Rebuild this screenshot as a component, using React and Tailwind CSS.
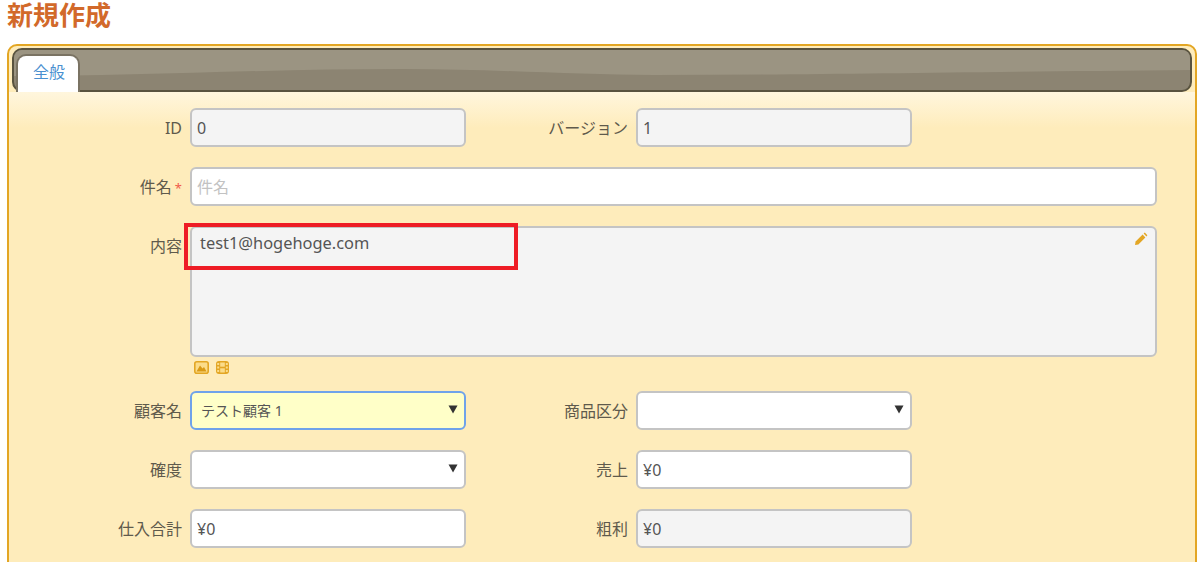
import React from 'react';

const font = 'font-["Noto_Sans","Noto_Sans_CJK_JP",sans-serif]';
const boxBase = 'h-[39px] rounded-[6px] border-2 text-[16px] text-[#555555] flex items-center';

const Field = ({ label, required, width = 'w-[173px]' }) => (
  <label className={`${width} h-[39px] shrink-0 pt-[1px] text-right text-[16px] leading-[39px] text-[#5f5a4c]`}>
    {label}
    {required && <span className="ml-[3px] text-[13px] text-[#f05a4a]">*</span>}
  </label>
);

const TextBox = ({ value, placeholder, readOnly, className = 'w-[276px]' }) => (
  <div
    className={`${boxBase} ${className} ml-[8px] shrink-0 border-[#c4c4c4] pl-[5px] ${
      readOnly ? 'bg-[#f4f4f4]' : 'bg-white'
    }`}
  >
    {value}
    {placeholder && <span className="text-[#c2c2c2]">{placeholder}</span>}
  </div>
);

const SelectBox = ({ value, active, className = 'w-[276px]' }) => (
  <div
    className={`${boxBase} ${className} ml-[8px] shrink-0 justify-between pl-[9px] pr-[6px] ${
      active ? 'border-[#6fa3ea] bg-[#ffffc8]' : 'border-[#c4c4c4] bg-white'
    }`}
  >
    <span className="text-[14px]">{value}</span>
    <svg width="10" height="9" viewBox="0 0 10 9" className="mb-[3px]">
      <path d="M0.5 0.5H9.5L5 8.5Z" fill="#333333" />
    </svg>
  </div>
);

const TabBar = () => (
  <div className="relative mx-[3px] mt-[2px] h-[44px]">
    <div className="relative h-full overflow-hidden rounded-[10px] border-2 border-[#59533f] bg-[#8c8472]">
      {/* sheen across the top of the bar */}
      <svg className="absolute inset-0 h-full w-full" viewBox="0 0 1176 40" preserveAspectRatio="none">
        <path
          d="M0 26 C 120 26 250 19 390 19 C 480 19 560 25 640 25 C 800 25 950 22 1176 20 V0 H0 Z"
          fill="#9b9482"
        />
      </svg>
    </div>
    <div className="absolute bottom-0 left-[4px] flex h-[38px] w-[64px] items-center justify-center rounded-t-[10px] border-2 border-b-0 border-[#7a7363] bg-white pb-[4px] pl-[2px] text-[16px] text-[#4a90d0]">
      全般
    </div>
  </div>
);

const App = () => {
  return (
    <div className={`${font} relative h-[562px] w-[1200px] overflow-hidden bg-white`}>
      <h1 className="h-[44px] pl-[7px] text-[26px] font-bold leading-[30px] text-[#d2692a]">新規作成</h1>

      <div className="ml-[7px] h-[560px] w-[1190px] rounded-t-[10px] border-2 border-[#e3a624] bg-[#feecbb]">
        <TabBar />

        <div className="bg-gradient-to-b from-[#fff6dd] to-[#feecbb] bg-no-repeat pt-[16px] [background-size:100%_36px]">
          <div className="flex">
            <Field label="ID" />
            <TextBox value="0" readOnly />
            <Field label="バージョン" width="w-[162px]" />
            <TextBox value="1" readOnly />
          </div>

          <div className="mt-[20px] flex">
            <Field label="件名" required />
            <TextBox placeholder="件名" className="w-[967px]" />
          </div>

          <div className="mt-[20px] flex">
            <Field label="内容" />
            <div className="relative ml-[8px] h-[131px] w-[967px] rounded-[6px] border-2 border-[#c4c4c4] bg-[#f4f4f4] pl-[8px] pt-[2px] text-[16.4px] leading-[26px] text-[#555555]">
              test1@hogehoge.com
              <svg className="absolute right-[7px] top-[4px]" width="14" height="14" viewBox="0 0 14 14">
                <path d="M1 13 L1.6 9.6 L8.6 2.6 L11.4 5.4 L4.4 12.4 Z" fill="#e3a624" />
                <path d="M9.6 1.6 L10.8 0.6 L13.4 3.2 L12.4 4.4 Z" fill="#e3a624" />
              </svg>
            </div>
          </div>

          <div className="ml-[185px] mt-[3px] flex h-[15px] items-center gap-[7px]">
            <svg width="15" height="13" viewBox="0 0 15 13">
              <rect x="0.8" y="0.8" width="13.4" height="11.4" rx="2" fill="#fbdc8a" stroke="#e3a624" strokeWidth="1.6" />
              <path d="M2.5 10.5 L6 4.5 L8.5 7.5 L10 6 L12.5 10.5 Z" fill="#d99a16" />
            </svg>
            <svg width="13" height="13" viewBox="0 0 13 13">
              <rect x="0" y="0" width="13" height="13" rx="3" fill="#e3a624" />
              <rect x="4.2" y="1.5" width="4.6" height="4.2" fill="#fbdc8a" />
              <rect x="4.2" y="7.3" width="4.6" height="4.2" fill="#fbdc8a" />
              <rect x="1.2" y="2" width="2" height="2" fill="#fbdc8a" />
              <rect x="1.2" y="5.5" width="2" height="2" fill="#fbdc8a" />
              <rect x="1.2" y="9" width="2" height="2" fill="#fbdc8a" />
              <rect x="9.8" y="2" width="2" height="2" fill="#fbdc8a" />
              <rect x="9.8" y="5.5" width="2" height="2" fill="#fbdc8a" />
              <rect x="9.8" y="9" width="2" height="2" fill="#fbdc8a" />
            </svg>
          </div>

          <div className="mt-[16px] flex">
            <Field label="顧客名" />
            <SelectBox value="テスト顧客 1" active />
            <Field label="商品区分" width="w-[162px]" />
            <SelectBox />
          </div>

          <div className="mt-[20px] flex">
            <Field label="確度" />
            <SelectBox />
            <Field label="売上" width="w-[162px]" />
            <TextBox value="¥0" />
          </div>

          <div className="mt-[20px] flex">
            <Field label="仕入合計" />
            <TextBox value="¥0" />
            <Field label="粗利" width="w-[162px]" />
            <TextBox value="¥0" readOnly />
          </div>
        </div>
      </div>

      {/* red annotation over the textarea */}
      <div className="absolute left-[184px] top-[223px] h-[47px] w-[334px] border-4 border-[#ee1c25]" />
    </div>
  );
};

export default App;
